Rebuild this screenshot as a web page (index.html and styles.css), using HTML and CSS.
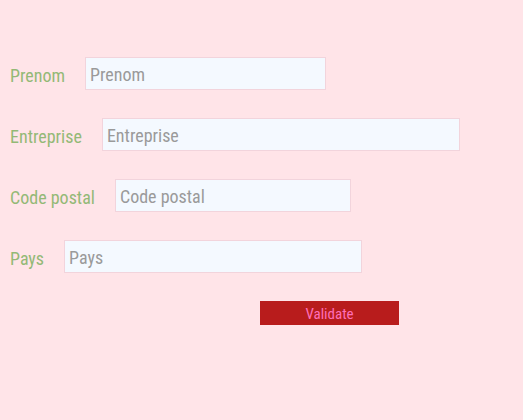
FILE: index.html
```html
<!DOCTYPE html>
<html lang="fr">
<head>
<meta charset="utf-8">
<title>Form</title>
<link rel="stylesheet" href="styles.css">
</head>
<body>
<form class="form">
  <div class="row">
    <label class="label" for="prenom">Prenom</label>
    <input class="field field-prenom" id="prenom" type="text" placeholder="Prenom">
  </div>
  <div class="row">
    <label class="label" for="entreprise">Entreprise</label>
    <input class="field field-entreprise" id="entreprise" type="text" placeholder="Entreprise">
  </div>
  <div class="row">
    <label class="label" for="cp">Code postal</label>
    <input class="field field-cp" id="cp" type="text" placeholder="Code postal">
  </div>
  <div class="row">
    <label class="label" for="pays">Pays</label>
    <input class="field field-pays" id="pays" type="text" placeholder="Pays">
  </div>
  <div class="actions">
    <button class="validate" type="button">Validate</button>
  </div>
</form>
</body>
</html>
```
FILE: styles.css
```css
html, body {
  margin: 0;
  padding: 0;
  background: #ffe4e8;
  height: 100%;
}
body {
  font-family: "Roboto Condensed", "Liberation Sans", Arial, sans-serif;
}
.form {
  display: flex;
  flex-direction: column;
  gap: 28px;
  padding: 57px 0 0 10px;
}
.row {
  display: flex;
  align-items: center;
  gap: 20px;
  height: 33px;
}
.label {
  color: #93b976;
  font-size: 18px;
  padding-top: 3px;
}
.field {
  box-sizing: border-box;
  height: 33px;
  padding: 2px 4px 0;
  border: 1px solid #f2d4dc;
  background: #f4f9ff;
  font-family: inherit;
  font-size: 18px;
  color: #555;
  outline: none;
}
.field::placeholder {
  color: #9a9a9a;
}
.field-prenom { width: 241px; }
.field-entreprise { width: 358px; }
.field-cp { width: 236px; }
.field-pays { width: 298px; }
.actions {
  padding-left: 250px;
}
.validate {
  width: 139px;
  height: 24px;
  border: none;
  background: #b81c1c;
  color: #ff6fb8;
  font-family: inherit;
  font-size: 15px;
  padding: 2px 0 0;
}
```
